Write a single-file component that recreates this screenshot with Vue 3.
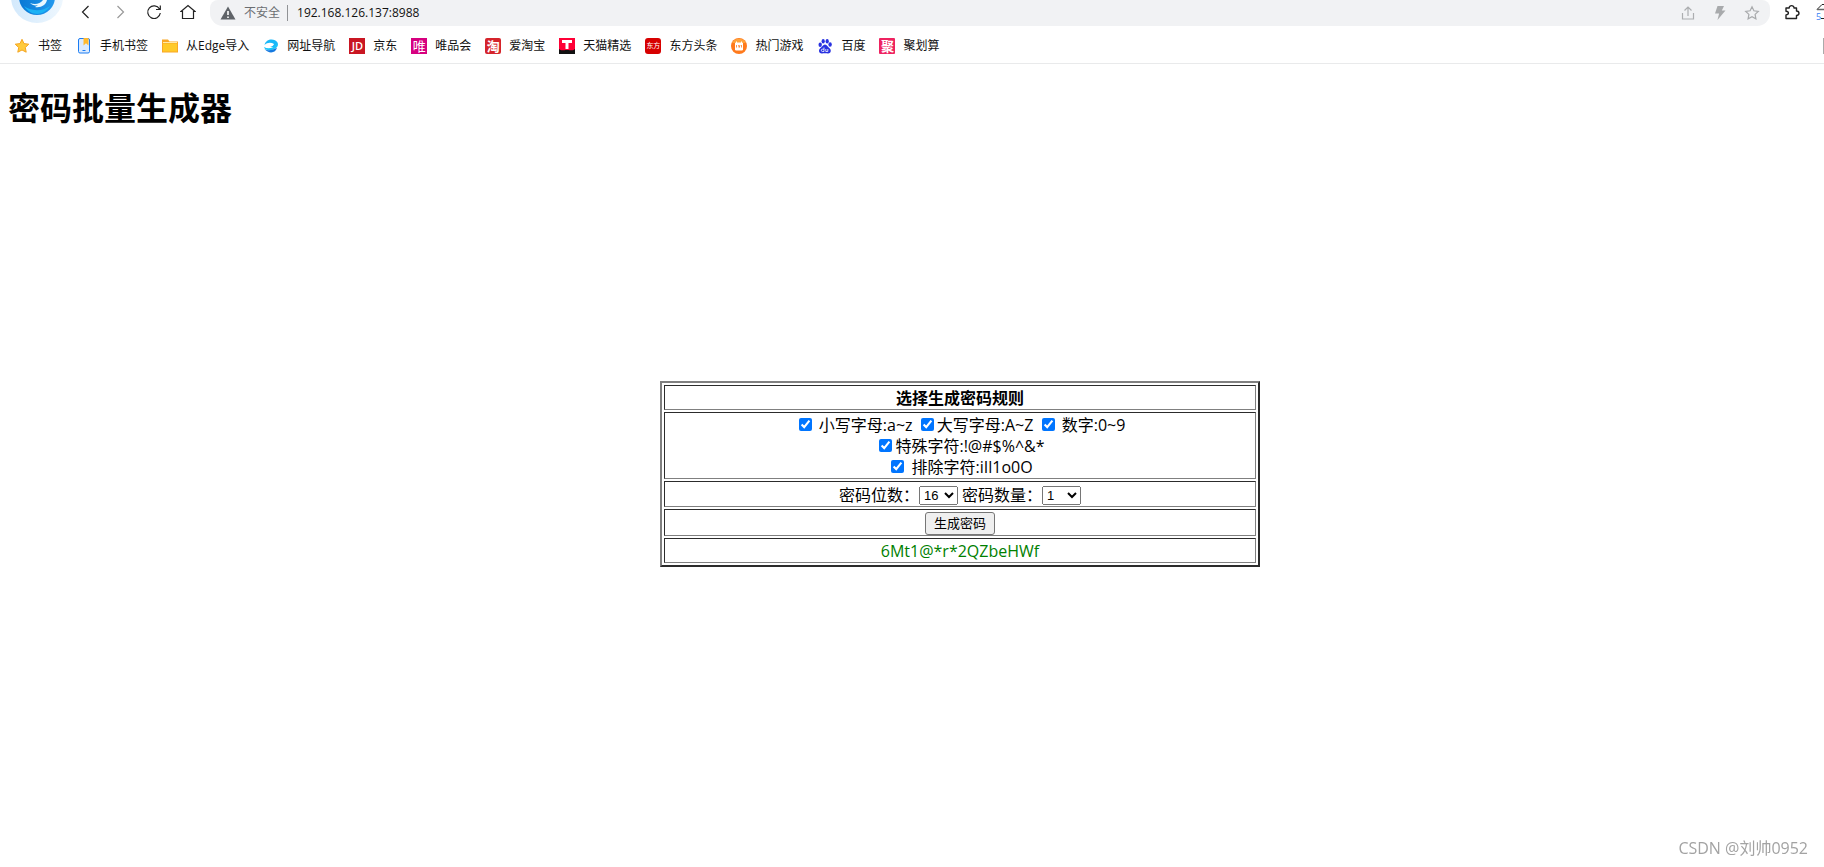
<script setup>
import { ref } from 'vue'

const address = ref('192.168.126.137:8988')
const lower = ref(true)
const upper = ref(true)
const digits = ref(true)
const special = ref(true)
const exclude = ref(true)
const length = ref(16)
const count = ref(1)
const lengths = [8, 10, 12, 16]
const counts = [1, 5, 10, 20]
const password = ref('6Mt1@*r*2QZbeHWf')

const bookmarks = [
  { icon: 'star', label: '书签' },
  { icon: 'phone', label: '手机书签' },
  { icon: 'folder', label: '从Edge导入' },
  { icon: 'nav', label: '网址导航' },
  { icon: 'jd', label: '京东', glyph: 'JD' },
  { icon: 'vip', label: '唯品会', glyph: '唯' },
  { icon: 'tao', label: '爱淘宝', glyph: '淘' },
  { icon: 'tmall', label: '天猫精选' },
  { icon: 'east', label: '东方头条', glyph: '东方' },
  { icon: 'game', label: '热门游戏' },
  { icon: 'baidu', label: '百度' },
  { icon: 'ju', label: '聚划算', glyph: '聚' }
]

function generate() {
  let pool = ''
  if (lower.value) pool += 'abcdefghijklmnopqrstuvwxyz'
  if (upper.value) pool += 'ABCDEFGHIJKLMNOPQRSTUVWXYZ'
  if (digits.value) pool += '0123456789'
  if (special.value) pool += '!@#$%^&*'
  if (exclude.value) pool = [...pool].filter(c => !'iIl1o0O'.includes(c)).join('')
  if (!pool) return
  const make = () =>
    Array.from({ length: length.value }, () => pool[Math.floor(Math.random() * pool.length)]).join('')
  password.value = Array.from({ length: count.value }, make).join('\n')
}
</script>

<template>
  <div class="window">
    <header class="chrome">
      <div class="toolbar">
        <svg class="logo" viewBox="0 0 52 24" aria-hidden="true">
          <defs>
            <linearGradient id="ball" x1="0" y1="0" x2="1" y2="0">
              <stop offset="0" stop-color="#0a78d4" />
              <stop offset="1" stop-color="#2399ee" />
            </linearGradient>
            <linearGradient id="ring" x1="0" y1="0" x2="1" y2="0">
              <stop offset="0" stop-color="#d3e9fc" />
              <stop offset="1" stop-color="#eef7fe" />
            </linearGradient>
          </defs>
          <circle cx="26" cy="-3" r="26" fill="url(#ring)" />
          <circle cx="26" cy="-3" r="18" fill="url(#ball)" />
          <path d="M13 6c6 5 18 6 26 0-5 9-18 12-26 0Z" fill="#1cb2f5" />
          <path d="M19 3c5 2 10 1 13-3h4c-1 5-6 8-12 7 1-1 2-1 3-2-3 1-6 0-8-2Z" fill="#e8f7ff" />
        </svg>
        <button class="tool" aria-label="后退">
          <svg viewBox="0 0 16 16"><path d="M10.500 2 4.500 8l6 6" stroke="#222" stroke-width="1.200" /></svg>
        </button>
        <button class="tool" aria-label="前进">
          <svg viewBox="0 0 16 16"><path d="m5.500 2 6 6-6 6" stroke="#999" stroke-width="1.200" /></svg>
        </button>
        <button class="tool" aria-label="刷新">
          <svg viewBox="0 0 16 16"><path d="M13.500 5A6.300 6.300 0 1 0 14.300 9M14.300 1.500V5.500H10" stroke="#222" stroke-width="1.200" /></svg>
        </button>
        <button class="tool" aria-label="主页">
          <svg viewBox="0 0 16 16"><path d="M2.500 14.500V7.500H1L8 1.500 15 7.500H13.500V14.500Z" stroke="#222" stroke-width="1.200" /></svg>
        </button>
        <div class="address">
          <svg class="warn" viewBox="0 0 16 14"><path d="M8 .5 15.500 13.500H.5Z" fill="#5f6368" /><path d="M8 5v4M8 10.500v1.500" stroke="#fff" stroke-width="1.600" /></svg>
          <label class="unsafe" for="url">不安全</label>
          <input id="url" v-model="address" class="url" type="text" />
          <button class="mini" aria-label="分享">
            <svg viewBox="0 0 16 16"><path d="M2.500 8v6h11V8M8 11V2M4.500 5.500 8 2l3.500 3.500" stroke="#acaeb0" stroke-width="1.200" /></svg>
          </button>
          <button class="mini" aria-label="加速">
            <svg viewBox="0 0 16 16"><path d="M5.500 1H12L9.800 5.500h3.700L5.500 15l1.600-6.500H3Z" fill="#a8aaac" /></svg>
          </button>
          <button class="mini" aria-label="收藏">
            <svg viewBox="0 0 16 16"><path d="m8 1.800 1.900 4 4.400.6-3.200 3 .8 4.400L8 11.700l-3.900 2.100.8-4.400-3.200-3 4.400-.6Z" stroke="#a8aaac" stroke-width="1.200" /></svg>
          </button>
        </div>
        <button class="puzzle" aria-label="扩展">
          <svg viewBox="0 0 16 16"><path d="M2 4h3.200C5 .8 10.200.8 10 4h2.500v3c3.300.2 3.300 4.200 0 4.500V14.500H2V11c3.200-.2 3.200-3.600 0-3.800Z" stroke="#222" stroke-width="1.400" stroke-linejoin="round" /></svg>
        </button>
        <div class="edge-tool">
          <svg viewBox="0 0 10 22" aria-hidden="true"><path d="m3 9.500 5-5h2M7 18.500h3" stroke="#222" fill="none" /><path d="M3 9.500h7" stroke="#666" stroke-width="1.500" /></svg>
          <span class="badge">5</span>
        </div>
      </div>

      <nav class="bookmarks">
        <a v-for="b in bookmarks" :key="b.label" class="bookmark" href="#">
          <span v-if="b.glyph" class="tile" :class="b.icon">{{ b.glyph }}</span>
          <svg v-else class="icon" viewBox="0 0 16 16" aria-hidden="true">
            <path v-if="b.icon === 'star'" d="m8 1.300 2 4.300 4.800.6-3.500 3.300.9 4.700L8 12l-4.200 2.200.9-4.700L1.200 6.200 6 5.600Z" fill="#ffcb3d" stroke="#f5a623" stroke-linejoin="round" />
            <g v-else-if="b.icon === 'phone'">
              <rect x="2.500" y=".5" width="11" height="14.500" rx="1.500" fill="#dbeafe" stroke="#1a7cf3" />
              <path d="M7.500 0h5v7.500L10 5.300 7.500 7.500Z" fill="#ffb92e" />
              <path d="M6.500 12.500h3" stroke="#1a7cf3" />
            </g>
            <g v-else-if="b.icon === 'folder'">
              <path d="M0 1.500h6l1.500 2H16v11H0Z" fill="#f9a825" />
              <path d="M1 5.500h14V13.500H1Z" fill="#ffca28" />
              <path d="M1 4.500h14" stroke="#ffe9a8" />
            </g>
            <g v-else-if="b.icon === 'nav'">
              <path d="M1.500 7C3 0 12 0 14.500 4.500c.8 1.500.5 3-.5 4.500H7c2-.5 3.500-1.500 4-3C8 4 4 4.500 1.500 7Z" fill="#1ab8f8" />
              <path d="M1 9c4 2.500 9 1.500 13-3 .5 1.500 0 3-1 4-3 2-6 2.500-8 2C3 11.800 1.500 11 1 9Z" fill="#19c5fa" />
              <path d="M1.500 11c3 2 8 1.500 12.500-1.500C13 15 6 16.500 1.500 11Z" fill="#1479e0" />
              <path d="M5.500 7.500c1.500-1 3-1.500 5-1.500-.8 1.500-3 2.500-5 1.500Z" fill="#fff" />
            </g>
            <g v-else-if="b.icon === 'tmall'">
              <rect width="16" height="16" fill="#ff0036" />
              <path d="M0 11c2 2 4 1 8 1s6 1 8-1v5H0Z" fill="#111" />
              <path d="M3 2h10v3H9.500v6h-3V5H3Z" fill="#fff" />
            </g>
            <g v-else-if="b.icon === 'game'">
              <circle cx="8" cy="8" r="8" fill="#ff7a1c" />
              <path d="M1 5a8 8 0 0 1 14 0Z" fill="#ffa33c" />
              <path d="M4.500 5h7v7h-7ZM5.500 3.500V5M10.500 3.500V5" fill="#fff" stroke="#fff" />
              <path d="M5.500 7v2.500M7.500 7l.7 2.500L9 7M10.500 7v2.500" stroke="#ff7a1c" stroke-width=".8" fill="none" />
            </g>
            <g v-else fill="#2932e1">
              <ellipse cx="3.200" cy="6.800" rx="1.700" ry="2.200" />
              <ellipse cx="6.200" cy="3.200" rx="1.600" ry="2.300" />
              <ellipse cx="10.200" cy="3.200" rx="1.600" ry="2.300" />
              <ellipse cx="13.100" cy="6.500" rx="1.700" ry="2.200" />
              <path d="M8 6.500c2 0 2.800 2.400 4.800 4 2 2 .7 5.200-1.800 5-1.500-.2-4.500-.2-6 0-2.700.2-4-3-2-5 2-1.600 3-4 5-4Z" />
              <path d="M7 9.500V13.500H5.500A1 1 0 0 1 5.500 11.200H7M8.800 11v2.500h2V11" fill="none" stroke="#fff" stroke-width=".8" />
            </g>
          </svg>
          <span>{{ b.label }}</span>
        </a>
        <span class="sliver"></span>
      </nav>
    </header>

    <main class="page">
      <h1>密码批量生成器</h1>
      <form class="generator" @submit.prevent="generate">
        <table>
          <thead>
            <tr><th>选择生成密码规则</th></tr>
          </thead>
          <tbody>
            <tr>
              <td>
                <label><input v-model="lower" type="checkbox" /> 小写字母:a~z</label>&nbsp;<label><input v-model="upper" type="checkbox" />大写字母:A~Z</label>&nbsp;<label><input v-model="digits" type="checkbox" /> 数字:0~9</label><br />
                <label><input v-model="special" type="checkbox" />特殊字符:!@#$%^&amp;*</label><br />
                <label><input v-model="exclude" type="checkbox" /> 排除字符:iIl1o0O</label>
              </td>
            </tr>
            <tr>
              <td>
                <div class="choices">
                  <label for="length">密码位数：</label>
                  <select id="length" v-model="length">
                    <option v-for="n in lengths" :key="n" :value="n">{{ n }}</option>
                  </select>
                  <label class="second" for="count">密码数量：</label>
                  <select id="count" v-model="count">
                    <option v-for="n in counts" :key="n" :value="n">{{ n }}</option>
                  </select>
                </div>
              </td>
            </tr>
            <tr>
              <td><button class="submit" type="submit">生成密码</button></td>
            </tr>
            <tr>
              <td class="result">{{ password }}</td>
            </tr>
          </tbody>
        </table>
      </form>
    </main>
    <div class="watermark">CSDN @刘帅0952</div>
  </div>
</template>

<style>
body {
  background: #fff;
}
</style>

<style scoped>
.window {
  min-height: 100vh;
  overflow: hidden;
  color: #000;
  font-family: "Open Sans", "Noto Sans CJK SC", sans-serif;
  font-size: 16px;
}
button, input, select {
  font-family: inherit;
}
.chrome {
  border-bottom: 1px solid #e9eaeb;
  font-size: 12px;
}
.toolbar {
  display: flex;
  align-items: flex-start;
  height: 26px;
  padding-left: 11px;
}
.logo {
  flex: none;
  width: 52px;
  height: 24px;
  margin-right: 6px;
}
.tool, .mini, .puzzle {
  display: flex;
  flex: none;
  align-items: center;
  justify-content: center;
  height: 24px;
  padding: 0;
  border: 0;
  background: none;
}
.tool {
  width: 34px;
}
.tool svg, .mini svg, .puzzle svg {
  width: 16px;
  height: 16px;
  fill: none;
}
.mini {
  width: 32px;
}
.puzzle {
  width: 44px;
}
.address {
  display: flex;
  flex: 1;
  align-items: center;
  height: 26px;
  margin-left: 5px;
  padding: 0 2px 1px 10px;
  box-sizing: border-box;
  border-radius: 8px 8px 13px 13px;
  background: #f1f2f4;
}
.warn {
  width: 16px;
  height: 14px;
}
.unsafe {
  margin-left: 8px;
  padding-right: 7px;
  border-right: 1px solid #909295;
  color: #6b6e72;
  line-height: 16px;
}
.url {
  flex: 1;
  min-width: 0;
  padding: 0 0 0 9px;
  border: 0;
  outline: 0;
  background: none;
  color: #111;
  font-size: 12px;
  line-height: 16px;
}
.edge-tool {
  position: relative;
  flex: none;
  width: 10px;
  height: 22px;
}
.edge-tool svg {
  width: 10px;
  height: 22px;
}
.badge {
  position: absolute;
  left: 2px;
  top: 12px;
  color: #3b82f6;
  font-size: 9px;
  line-height: 10px;
}
.bookmarks {
  display: flex;
  align-items: center;
  gap: 14px;
  height: 34px;
  padding: 3px 0 0 14px;
}
.bookmark {
  display: flex;
  flex: none;
  align-items: center;
  gap: 8px;
  color: #111;
  line-height: 16px;
  text-decoration: none;
}
.icon, .tile {
  width: 16px;
  height: 16px;
}
.tile {
  overflow: hidden;
  color: #fff;
  font-size: 13px;
  line-height: 16px;
  text-align: center;
}
.jd {
  background: #c91623;
  font-weight: 600;
  font-size: 11px;
}
.vip {
  background: #d6007f;
}
.tao {
  border-radius: 2px;
  background: #d5242b;
  font-weight: 700;
}
.east {
  border-radius: 3px;
  background: #d70000;
  font-size: 7px;
}
.ju {
  border-radius: 1px;
  background: #ee2360;
  font-weight: 700;
}
.sliver {
  width: 1px;
  height: 16px;
  margin-left: auto;
  background: #aaa;
}
.page {
  padding: 22px 8px 8px;
}
h1 {
  margin: 0;
  font-size: 32px;
  font-weight: 700;
  line-height: 44px;
}
.generator {
  margin: 251px 0 0 96px;
}
table {
  width: 600px;
  max-width: 100%;
  margin: 0 auto;
  border: 2px solid;
  border-color: #808080 #2c2c2c #2c2c2c #808080;
  border-spacing: 2px;
}
th, td {
  padding: 2px 1px 0;
  border: 1px solid;
  border-color: #2c2c2c #808080 #808080 #2c2c2c;
  line-height: 21px;
  text-align: center;
}
input[type="checkbox"] {
  width: 13px;
  height: 13px;
  margin: 3px 3px 3px 4px;
}
.choices {
  display: flex;
  align-items: center;
  justify-content: center;
  height: 22px;
}
.second {
  margin-left: 4px;
}
select {
  width: 39px;
  height: 19px;
  margin: 0;
  font-family: "Liberation Sans", sans-serif;
  font-size: 13px;
}
.submit {
  display: block;
  height: 23px;
  margin: 0 auto;
  padding: 0 8px;
  border: 1px solid #767676;
  border-radius: 3px;
  background: #efefef;
  color: #000;
  font-size: 13px;
  line-height: 21px;
}
.result {
  color: #008000;
  white-space: pre-line;
}
.watermark {
  position: fixed;
  right: 16px;
  bottom: 8px;
  color: #a3a3a3;
  font-size: 16px;
  line-height: 22px;
}
</style>
